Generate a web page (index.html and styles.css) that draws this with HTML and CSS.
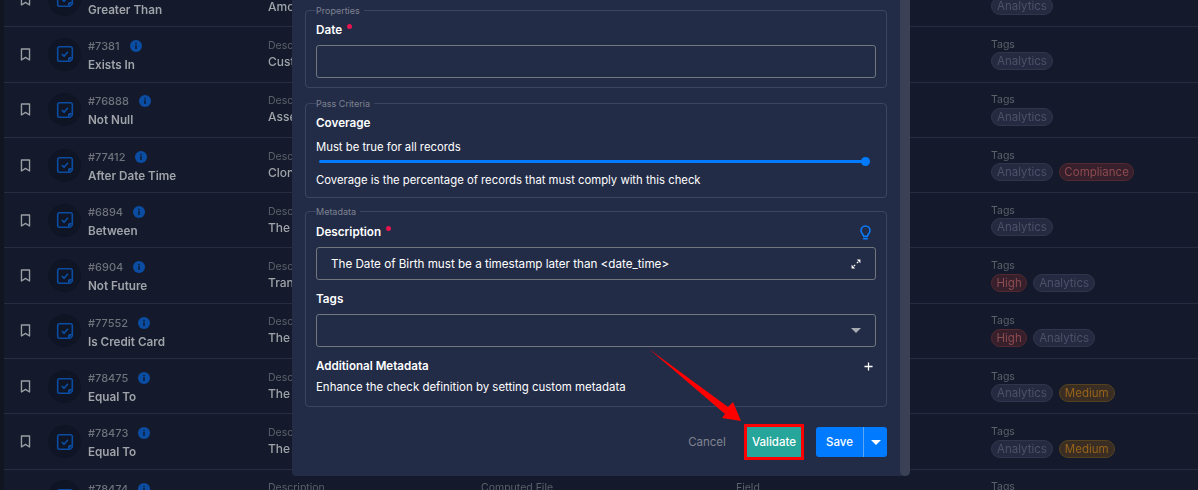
FILE: index.html
```html
<!DOCTYPE html>
<html lang="en">
<head>
<meta charset="utf-8">
<title>Checks</title>
<link rel="stylesheet" href="styles.css">
</head>
<body>
<svg class="defs" width="0" height="0" aria-hidden="true">
  <symbol id="bm" viewBox="0 0 12 14"><path d="M1.6 1h8.8v12l-4.4-2.8-4.400 2.800z" fill="none" stroke="currentColor" stroke-width="1.500" stroke-linejoin="round"/></symbol>
  <symbol id="chk" viewBox="0 0 18 18"><path d="M14 16.300H3.400a1.700 1.700 0 0 1-1.700-1.700V3.400a1.700 1.700 0 0 1 1.700-1.700h11.200a1.700 1.700 0 0 1 1.700 1.700V14z" fill="none" stroke="currentColor" stroke-width="1.600"/><path d="M16.600 12h-3a1.600 1.600 0 0 0-1.600 1.600v3z" fill="currentColor"/><path d="M5.800 9l2.200 2.200 4-4.400" fill="none" stroke="currentColor" stroke-width="1.700"/></symbol>
  <symbol id="inf" viewBox="0 0 12 12"><circle cx="6" cy="6" r="6" fill="currentColor"/><rect x="5.300" y="5" width="1.400" height="4" fill="#10172a"/><rect x="5.300" y="2.800" width="1.400" height="1.400" fill="#10172a"/></symbol>
</svg>

<main class="list">
  <article class="row">
    <svg class="bm"><use href="#bm"/></svg>
    <span class="disc"><svg class="chk"><use href="#chk"/></svg></span>
    <div class="name"><div class="id">#7380 <svg class="inf"><use href="#inf"/></svg></div><div class="title">Greater Than</div></div>
    <div class="col desc under"><div class="lab">Description</div><div class="val">Amount</div></div>
    <div class="col file"></div>
    <div class="col field"></div>
    <div class="col tags"><div class="lab">Tags</div><div class="pills"><span class="pill an">Analytics</span></div></div>
  </article>
  <article class="row">
    <svg class="bm"><use href="#bm"/></svg>
    <span class="disc"><svg class="chk"><use href="#chk"/></svg></span>
    <div class="name"><div class="id">#7381 <svg class="inf"><use href="#inf"/></svg></div><div class="title">Exists In</div></div>
    <div class="col desc under"><div class="lab">Description</div><div class="val">Customer</div></div>
    <div class="col file"></div>
    <div class="col field"></div>
    <div class="col tags"><div class="lab">Tags</div><div class="pills"><span class="pill an">Analytics</span></div></div>
  </article>
  <article class="row">
    <svg class="bm"><use href="#bm"/></svg>
    <span class="disc"><svg class="chk"><use href="#chk"/></svg></span>
    <div class="name"><div class="id">#76888 <svg class="inf"><use href="#inf"/></svg></div><div class="title">Not Null</div></div>
    <div class="col desc under"><div class="lab">Description</div><div class="val">Asserts</div></div>
    <div class="col file"></div>
    <div class="col field"></div>
    <div class="col tags"><div class="lab">Tags</div><div class="pills"><span class="pill an">Analytics</span></div></div>
  </article>
  <article class="row">
    <svg class="bm"><use href="#bm"/></svg>
    <span class="disc"><svg class="chk"><use href="#chk"/></svg></span>
    <div class="name"><div class="id">#77412 <svg class="inf"><use href="#inf"/></svg></div><div class="title">After Date Time</div></div>
    <div class="col desc under"><div class="lab">Description</div><div class="val">Clone</div></div>
    <div class="col file"></div>
    <div class="col field"></div>
    <div class="col tags"><div class="lab">Tags</div><div class="pills"><span class="pill an">Analytics</span><span class="pill red">Compliance</span></div></div>
  </article>
  <article class="row">
    <svg class="bm"><use href="#bm"/></svg>
    <span class="disc"><svg class="chk"><use href="#chk"/></svg></span>
    <div class="name"><div class="id">#6894 <svg class="inf"><use href="#inf"/></svg></div><div class="title">Between</div></div>
    <div class="col desc under"><div class="lab">Description</div><div class="val">The value</div></div>
    <div class="col file"></div>
    <div class="col field"></div>
    <div class="col tags"><div class="lab">Tags</div><div class="pills"><span class="pill an">Analytics</span></div></div>
  </article>
  <article class="row">
    <svg class="bm"><use href="#bm"/></svg>
    <span class="disc"><svg class="chk"><use href="#chk"/></svg></span>
    <div class="name"><div class="id">#6904 <svg class="inf"><use href="#inf"/></svg></div><div class="title">Not Future</div></div>
    <div class="col desc under"><div class="lab">Description</div><div class="val">Transaction</div></div>
    <div class="col file"></div>
    <div class="col field"></div>
    <div class="col tags"><div class="lab">Tags</div><div class="pills"><span class="pill red">High</span><span class="pill an">Analytics</span></div></div>
  </article>
  <article class="row">
    <svg class="bm"><use href="#bm"/></svg>
    <span class="disc"><svg class="chk"><use href="#chk"/></svg></span>
    <div class="name"><div class="id">#77552 <svg class="inf"><use href="#inf"/></svg></div><div class="title">Is Credit Card</div></div>
    <div class="col desc under"><div class="lab">Description</div><div class="val">The</div></div>
    <div class="col file"></div>
    <div class="col field"></div>
    <div class="col tags"><div class="lab">Tags</div><div class="pills"><span class="pill red">High</span><span class="pill an">Analytics</span></div></div>
  </article>
  <article class="row">
    <svg class="bm"><use href="#bm"/></svg>
    <span class="disc"><svg class="chk"><use href="#chk"/></svg></span>
    <div class="name"><div class="id">#78475 <svg class="inf"><use href="#inf"/></svg></div><div class="title">Equal To</div></div>
    <div class="col desc under"><div class="lab">Description</div><div class="val">The field</div></div>
    <div class="col file"></div>
    <div class="col field"></div>
    <div class="col tags"><div class="lab">Tags</div><div class="pills"><span class="pill an">Analytics</span><span class="pill amber">Medium</span></div></div>
  </article>
  <article class="row">
    <svg class="bm"><use href="#bm"/></svg>
    <span class="disc"><svg class="chk"><use href="#chk"/></svg></span>
    <div class="name"><div class="id">#78473 <svg class="inf"><use href="#inf"/></svg></div><div class="title">Equal To</div></div>
    <div class="col desc under"><div class="lab">Description</div><div class="val">The field</div></div>
    <div class="col file"></div>
    <div class="col field"></div>
    <div class="col tags"><div class="lab">Tags</div><div class="pills"><span class="pill an">Analytics</span><span class="pill amber">Medium</span></div></div>
  </article>
  <article class="row">
    <svg class="bm"><use href="#bm"/></svg>
    <span class="disc"><svg class="chk"><use href="#chk"/></svg></span>
    <div class="name"><div class="id">#78474 <svg class="inf"><use href="#inf"/></svg></div><div class="title">Equal To</div></div>
    <div class="col desc"><div class="lab">Description</div><div class="val">The field</div></div>
    <div class="col file"><div class="lab">Computed File</div><div class="val">customers</div></div>
    <div class="col field"><div class="lab">Field</div><div class="val">value</div></div>
    <div class="col tags"><div class="lab">Tags</div><div class="pills"><span class="pill an">Analytics</span></div></div>
  </article>
</main>

<section class="modal">
  <div class="modal-body">
    <fieldset class="group g-props">
      <legend>Properties</legend>
      <div class="label">Date <i class="req"></i></div>
      <div class="input"></div>
    </fieldset>
    <fieldset class="group g-pass">
      <legend>Pass Criteria</legend>
      <div class="label">Coverage</div>
      <div class="text must">Must be true for all records</div>
      <div class="slider"><span class="thumb"></span></div>
      <div class="text">Coverage is the percentage of records that must comply with this check</div>
    </fieldset>
    <fieldset class="group g-meta">
      <legend>Metadata</legend>
      <div class="label-row">
        <div class="label">Description <i class="req"></i></div>
        <svg class="bulb" viewBox="0 0 12 16"><path d="M4 12.200c0-2-2.900-3.100-2.900-6.300a4.900 4.900 0 0 1 9.800 0c0 3.200-2.900 4.300-2.900 6.300z" fill="none" stroke="#0a7cff" stroke-width="1.700"/><path d="M4 14.800h4" stroke="#0a7cff" stroke-width="1.800" stroke-linecap="round"/></svg>
      </div>
      <div class="input filled">
        <span class="text wide">The Date of Birth must be a timestamp later than &lt;date_time&gt;</span>
        <svg class="expand" viewBox="0 0 10 10"><path d="M5.800.6h3.600v3.600zM.6 5.800v3.600h3.600z" fill="#fff"/><path d="M7.200 2.800L5.800 4.200M2.800 7.200L4.200 5.800" stroke="#fff" stroke-width="1.200"/></svg>
      </div>
      <div class="label tags-label">Tags</div>
      <div class="input filled">
        <span></span>
        <span class="caret"></span>
      </div>
      <div class="label-row add">
        <div class="label">Additional Metadata</div>
        <svg class="plus" viewBox="0 0 10 10"><path d="M5 .5v9M.5 5h9" stroke="#fff" stroke-width="1.400"/></svg>
      </div>
      <div class="text enhance">Enhance the check definition by setting custom metadata</div>
    </fieldset>
    <footer class="actions">
      <button class="cancel" type="button">Cancel</button>
      <button class="validate" type="button">Validate</button>
      <div class="save"><button class="save-main" type="button">Save</button><button class="save-more" type="button"><span class="caret white"></span></button></div>
    </footer>
  </div>
  <div class="scroll"></div>
</section>

<svg class="arrow" viewBox="0 0 1198 490" aria-hidden="true"><path d="M649 349L728 407L733 402L741 421L722 418L725 414Z" fill="#ff0000"/></svg>
</body>
</html>
```
FILE: styles.css
```css
* { box-sizing: border-box; }
html, body { height: 100%; }
body {
  margin: 0;
  width: 1198px;
  height: 490px;
  overflow: hidden;
  background: #141a2b;
  font-family: Inter, "Noto Sans", sans-serif;
  color: #fff;
  position: relative;
}
.defs { position: absolute; }

.list {
  margin-top: -28px;
  padding-left: 4px;
  background: #10151f;
  filter: blur(0.35px);
}
.row {
  height: 55.3px;
  background: #141a2b;
  border-bottom: 1px solid #262d40;
  display: flex;
  align-items: center;
}
.bm { width: 11px; height: 13px; margin-left: 16px; color: #9a9da3; flex: none; }
.disc {
  width: 33px; height: 33px; margin-left: 17px; flex: none;
  border-radius: 50%;
  background: #0f1524;
  display: flex; align-items: center; justify-content: center;
}
.chk { width: 18px; height: 18px; color: #0a4da3; }
.name { width: 180px; margin-left: 7px; padding-top: 2.5px; flex: none; }
.id { font-size: 11px; color: #6f727b; font-weight: 500; display: flex; align-items: center; gap: 10px; height: 14px; }
.inf { width: 12px; height: 12px; color: #0a4da3; }
.title { font-size: 11.7px; font-weight: 600; color: #a0a3a9; margin-top: 5px; white-space: nowrap; }
.col { flex: none; }
.desc { width: 213px; }
.under .lab, .under .val { width: 24px; overflow: hidden; }
.file { width: 255px; }
.field { width: 255px; }
.lab { font-size: 10.5px; color: #5d6069; line-height: 14px; white-space: nowrap; }
.val { font-size: 12px; font-weight: 500; color: #a0a3a9; line-height: 16px; margin-top: 1px; white-space: nowrap; }
.tags .lab { margin-top: -0.5px; }
.pills { display: flex; gap: 6px; margin-top: 0.5px; }
.pill {
  font-size: 11.5px; line-height: 16px; padding: 0 5px; border-radius: 9px;
  border: 1px solid; font-weight: 400;
}
.an { color: #4c5169; background: #252a41; border-color: #30354d; }
.red { color: #8c4c50; background: #371f2c; border-color: #52292f; padding: 0 4.5px; }
.amber { color: #96631a; background: #3a2e24; border-color: #54421f; }

.modal {
  position: absolute;
  left: 292px; top: 0;
  width: 618px; height: 476px;
  display: flex;
  background: #232c47;
  border-radius: 0 0 4px 4px;
}
.modal-body { width: 608px; padding: 10px 13px 0; }
.scroll { width: 10px; background: #3a4157; border-radius: 0 0 5px 5px; }

.group {
  margin: 0 0 15px;
  padding: 0 10px;
  border: 1px solid #3b4561;
  border-radius: 4px;
  min-width: 0;
  height: 78px;
}
.group legend {
  font-size: 9px; line-height: 1; color: #7d8290; padding: 0 4px 0 0; margin-left: 0;
  height: 0; position: relative; top: -5px;
}
.g-pass { height: 95px; margin-bottom: 13px; }
.g-meta { height: 196px; margin-bottom: 0; }
.label { font-size: 11.7px; font-weight: 600; color: #fff; line-height: 16px; display: flex; align-items: flex-start; gap: 5px; }
.req { width: 5px; height: 5px; border-radius: 50%; background: #e8134f; margin-top: 2px; }
.g-props .label { margin-top: 11px; }
.input {
  width: 560px; height: 33px;
  margin-top: 7px;
  border: 1px solid #72767f;
  border-radius: 3px;
  display: flex; align-items: center; justify-content: space-between;
  padding: 0 14px;
}
.text { font-size: 11.3px; color: #fff; line-height: 16px; white-space: nowrap; }
.wide { font-size: 11.65px; }
.enhance { font-size: 11.45px; }
.g-pass .label { margin-top: 11px; }
.must { margin-top: 8px; }
.slider { height: 3px; margin: 5px 10px 0 3px; background: #007bff; position: relative; border-radius: 2px; }
.thumb { position: absolute; right: -4px; top: -3px; width: 9px; height: 9px; border-radius: 50%; background: #007bff; }
.slider + .text { margin-top: 9px; }
.label-row { display: flex; justify-content: space-between; align-items: center; width: 560px; }
.g-meta .label-row:first-of-type { margin-top: 12px; height: 16px; }
.bulb { width: 11px; height: 15px; margin-right: 5px; }
.expand { width: 10px; height: 10px; }
.tags-label { margin-top: 11px; }
.g-meta .add { margin-top: 11px; height: 16px; }
.add .label { font-size: 11.6px; }
.plus { width: 9px; height: 9px; margin-right: 3px; }
.add + .text { margin-top: 5px; }
.caret { width: 0; height: 0; border: 5px solid transparent; border-top: 5px solid #a9abb3; border-bottom: 0; }
.caret.white { border-top-color: #fff; }

.actions { display: flex; justify-content: flex-end; align-items: center; height: 36px; margin-top: 17px; }
button { font-family: inherit; font-size: 11.5px; font-weight: 500; color: #fff; border: 0; padding: 0; background: none; }
.cancel { color: #80848f; width: 38px; margin-right: 18px; font-weight: 400; }
.validate { width: 60px; height: 36px; background: #26a69a; border: 3px solid #ff0000; margin-right: 12px; }
.save { display: flex; height: 30px; width: 71px; background: #007bff; border-radius: 3px; overflow: hidden; }
.save-main { width: 48px; border-right: 1px solid #5da7f5; }
.save-more { flex: 1; display: flex; align-items: center; justify-content: center; }

.arrow { position: absolute; left: 0; top: 0; width: 1198px; height: 490px; pointer-events: none; }
```
